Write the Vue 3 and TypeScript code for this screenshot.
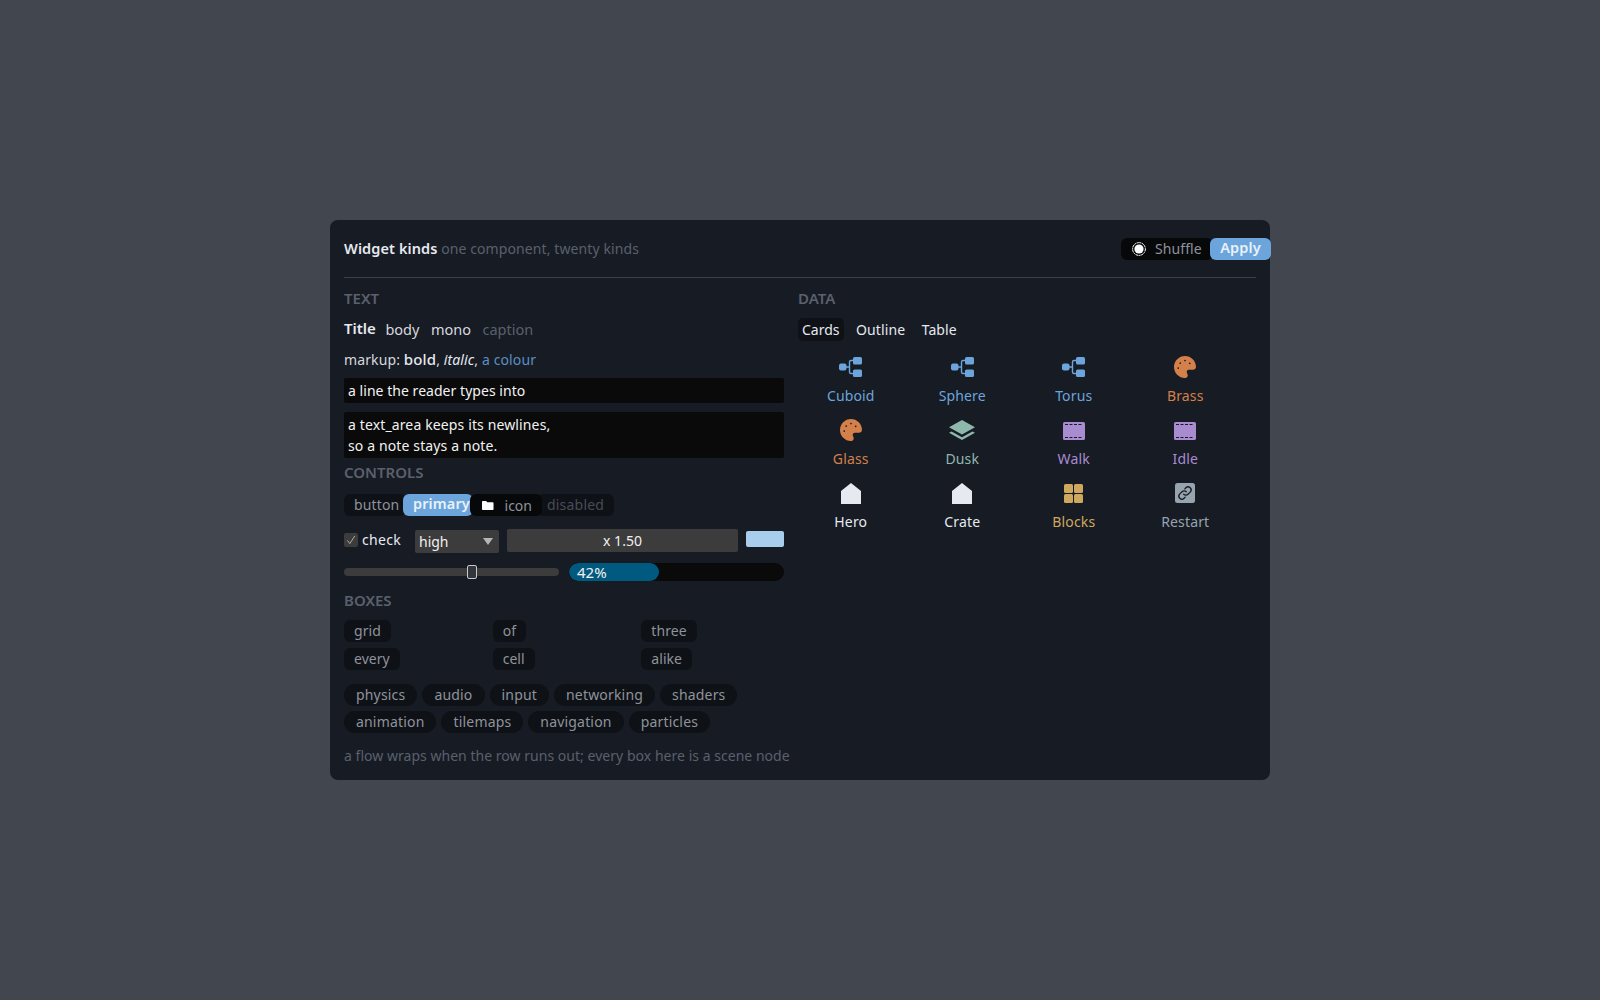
<script setup lang="ts">
interface Cell { label: string; icon: string; tone: string }
const cells: Cell[] = [
  { label: 'Cuboid', icon: 'tree', tone: 'blue' },
  { label: 'Sphere', icon: 'tree', tone: 'blue' },
  { label: 'Torus', icon: 'tree', tone: 'blue' },
  { label: 'Brass', icon: 'palette', tone: 'orange' },
  { label: 'Glass', icon: 'palette', tone: 'orange' },
  { label: 'Dusk', icon: 'layers', tone: 'teal' },
  { label: 'Walk', icon: 'film', tone: 'purple' },
  { label: 'Idle', icon: 'film', tone: 'purple' },
  { label: 'Hero', icon: 'house', tone: 'white' },
  { label: 'Crate', icon: 'house', tone: 'white' },
  { label: 'Blocks', icon: 'blocks', tone: 'gold' },
  { label: 'Restart', icon: 'link', tone: 'grey' },
]
const gridBoxes = ['grid', 'of', 'three', 'every', 'cell', 'alike']
const pills = [
  ['physics', 'audio', 'input', 'networking', 'shaders'],
  ['animation', 'tilemaps', 'navigation', 'particles'],
]
</script>

<template>
  <div class="page">
    <section class="card">
      <header class="head">
        <div class="head-title"><strong>Widget kinds</strong> <span class="muted sub">one component, twenty kinds</span></div>
        <div class="head-actions">
          <button class="btn btn-shuffle">
            <svg width="14" height="14" viewBox="0 0 14 14">
              <circle cx="7" cy="7" r="6.4" fill="none" stroke="#fff" stroke-width="1" stroke-dasharray="2.2 0.5" />
              <circle cx="7" cy="7" r="4.6" fill="#fff" />
            </svg>
            <span class="shuffle-label">Shuffle</span>
          </button>
          <button class="btn btn-primary btn-apply">Apply</button>
        </div>
      </header>

      <div class="cols">
        <div class="col">
          <h2 class="sec">TEXT</h2>
          <div class="kinds">
            <strong class="k-title">Title</strong>
            <span>body</span>
            <span>mono</span>
            <span class="muted">caption</span>
          </div>
          <p class="markup">markup: <b>bold</b>, <i>italic</i>, <span class="link">a colour</span></p>
          <div class="field">a line the reader types into</div>
          <div class="area">a text_area keeps its newlines,<br />so a note stays a note.</div>

          <h2 class="sec sec-controls">CONTROLS</h2>
          <div class="btn-row">
            <button class="btn b-plain">button</button>
            <button class="btn btn-primary b-primary">primary</button>
            <button class="btn b-icon">
              <svg width="14" height="11" viewBox="0 0 14 11">
                <path d="M1 0h4l1.4 1.6H13a1 1 0 0 1 1 1V10a1 1 0 0 1-1 1H1a1 1 0 0 1-1-1V1a1 1 0 0 1 1-1z" fill="#fff" />
              </svg>
              <span>icon</span>
            </button>
            <button class="btn b-disabled">disabled</button>
          </div>
          <div class="ctl-row">
            <label class="check">
              <span class="box">
                <svg width="14" height="14" viewBox="0 0 14 14">
                  <path d="M3.4 7.4l2.4 3.2L10.8 3" fill="none" stroke="#b4b4b4" stroke-width="0.9" />
                </svg>
              </span>
              check
            </label>
            <div class="select">
              <span>high</span>
              <span class="tri"></span>
            </div>
            <div class="spin">x 1.50</div>
            <div class="swatch"></div>
          </div>
          <div class="meter-row">
            <div class="slider"><span class="thumb"></span></div>
            <div class="progress">
              <div class="fill" :style="{ width: '42%' }">42%</div>
            </div>
          </div>

          <h2 class="sec sec-boxes">BOXES</h2>
          <div class="three">
            <div v-for="b in gridBoxes" :key="b" class="three-cell"><span class="chip">{{ b }}</span></div>
          </div>
          <div class="flow">
            <div v-for="(row, i) in pills" :key="i" class="flow-row">
              <span v-for="p in row" :key="p" class="pill">{{ p }}</span>
            </div>
          </div>
          <p class="foot">a flow wraps when the row runs out; every box here is a scene node</p>
        </div>

        <div class="col">
          <h2 class="sec">DATA</h2>
          <div class="tabs">
            <span class="tab tab-on">Cards</span>
            <span class="tab">Outline</span>
            <span class="tab">Table</span>
          </div>
          <div class="cells">
            <div v-for="c in cells" :key="c.label" class="cell" :class="c.tone">
              <div class="ico">
                <svg v-if="c.icon === 'tree'" width="23" height="20" viewBox="0 0 23 20">
                  <path d="M7 10h3.5M14 3.5h-2a1.5 1.5 0 0 0-1.5 1.5v10a1.5 1.5 0 0 0 1.5 1.5h2" fill="none" stroke="currentColor" stroke-width="1.4" />
                  <rect x="0" y="6.5" width="7.5" height="7" rx="2" fill="currentColor" />
                  <rect x="14" y="0" width="9" height="7.5" rx="1.6" fill="currentColor" />
                  <rect x="14" y="12.5" width="9" height="7.5" rx="1.6" fill="currentColor" />
                </svg>
                <svg v-else-if="c.icon === 'palette'" width="22" height="22" viewBox="0 0 512 512">
                  <path fill="currentColor" fill-rule="evenodd" d="M512 256c0 .9 0 1.8 0 2.7c-.4 36.5-33.6 61.3-70.1 61.3H344c-26.5 0-48 21.5-48 48c0 3.4 .4 6.7 1 9.9c2.1 10.2 6.5 20 10.8 29.9c6.1 13.8 12.1 27.5 12.1 42c0 31.8-21.6 60.7-53.4 62c-3.5 .1-7 .2-10.6 .2C114.6 512 0 397.4 0 256S114.6 0 256 0S512 114.6 512 256zM118 280a20 20 0 1 0 -40 0 20 20 0 1 0 40 0zM165 165a20 20 0 1 0 -40 0 20 20 0 1 0 40 0zM276 105a20 20 0 1 0 -40 0 20 20 0 1 0 40 0zM385 170a20 20 0 1 0 -40 0 20 20 0 1 0 40 0z" />
                </svg>
                <svg v-else-if="c.icon === 'layers'" width="26" height="20" viewBox="0 0 26 20">
                  <path d="M13 0l13 7.2-13 7.2L0 7.2z" fill="currentColor" />
                  <path d="M2.6 11.4L13 17.2l10.4-5.8L26 12.8 13 20 0 12.8z" fill="currentColor" />
                </svg>
                <svg v-else-if="c.icon === 'film'" class="film" width="22" height="18" viewBox="0 0 22 18">
                  <rect width="22" height="18" rx="1.6" fill="currentColor" />
                  <path d="M2 2.5H20M2 15.5H20" stroke="#171b24" stroke-width="1" stroke-dasharray="3 1.5" fill="none" />
                </svg>
                <svg v-else-if="c.icon === 'house'" width="20" height="21" viewBox="0 0 20 21">
                  <path d="M10 0l10 8v13H0V8z" fill="currentColor" />
                </svg>
                <svg v-else-if="c.icon === 'blocks'" width="19" height="19" viewBox="0 0 19 19">
                  <rect x="0" y="0" width="9" height="9" rx="1.5" fill="currentColor" />
                  <rect x="10" y="0" width="9" height="9" rx="1.5" fill="currentColor" />
                  <rect x="0" y="10" width="9" height="9" rx="1.5" fill="currentColor" />
                  <rect x="10" y="10" width="9" height="9" rx="1.5" fill="currentColor" />
                </svg>
                <svg v-else width="20" height="20" viewBox="0 0 20 20">
                  <rect width="20" height="20" rx="2.5" fill="currentColor" />
                  <path d="M8.7 11.3a3 3 0 0 0 4.3 0l2.2-2.2a3 3 0 0 0-4.3-4.3L9.8 5.9M11.3 8.7a3 3 0 0 0-4.3 0L4.8 10.9a3 3 0 0 0 4.3 4.3l1.1-1.1" fill="none" stroke="#171b24" stroke-width="1.3" stroke-linecap="round" />
                </svg>
              </div>
              <div class="cap">{{ c.label }}</div>
            </div>
          </div>
        </div>
      </div>
    </section>
  </div>
</template>

<style scoped>
.page {
  min-height: 100vh;
  display: flex;
  align-items: center;
  justify-content: center;
  background: #41464f;
  font-family: "Noto Sans", sans-serif;
  font-size: 14px;
  color: #d6d9df;
}
.card {
  box-sizing: border-box;
  width: 940px;
  height: 560px;
  padding: 14px;
  background: #171b24;
  border-radius: 8px;
}
.head {
  display: flex;
  justify-content: space-between;
  align-items: center;
  height: 28px;
  padding-bottom: 15px;
  border-bottom: 1px solid #3b3f48;
}
.head-title strong { font-weight: 600; font-size: 14.5px; letter-spacing: 0.1px; color: #e6e9ef; }
.muted { color: #5a606c; }
.sub { letter-spacing: 0.1px; }
.head-actions { display: flex; margin-right: -15px; margin-top: 2px; }
.btn {
  box-sizing: border-box;
  display: flex;
  align-items: center;
  height: 22px;
  padding: 0 10px;
  border: 0;
  border-radius: 6px;
  font: inherit;
  color: #8e939c;
  background: #0e1116;
}
.btn-primary { background: #6ca5dc; color: #e9f1f9; font-weight: 600; font-size: 14.5px; letter-spacing: 0.1px; padding-bottom: 4px; }
.btn-shuffle { width: 92px; padding: 0 0 0 11px; gap: 9px; background: #07080a; letter-spacing: 0.1px; }
.shuffle-label { margin-top: -2px; }
.btn-apply { position: relative; margin-left: -3px; width: 61px; justify-content: center; }
.cols {
  display: grid;
  grid-template-columns: 440px 440px;
  column-gap: 14px;
}
.sec {
  margin: 11px 0 0;
  height: 20px;
  line-height: 18px;
  font-size: 15px;
  font-weight: 600;
  color: #5a606c;
}
.kinds { display: flex; align-items: center; gap: 11.5px; height: 22px; margin-top: 9px; font-size: 14.5px; }
.k-title { font-weight: 600; font-size: 15px; color: #e6e9ef; margin-top: -2px; margin-right: -2px; }
.markup { margin: 9px 0 0; height: 20px; line-height: 20px; letter-spacing: 0.12px; }
.markup b { font-weight: 500; color: #e6e9ef; font-size: 15px; }
.markup i { color: #e6e9ef; }
.link { color: #5a8fc2; }
.field, .area {
  box-sizing: border-box;
  background: #0a0a0a;
  color: #f2f2f2;
  padding: 0 4px;
  border-radius: 2px;
}
.field { margin-top: 9px; height: 25px; line-height: 25px; letter-spacing: 0.04px; }
.area { margin-top: 9px; height: 46px; padding-top: 2px; line-height: 21px; letter-spacing: 0.13px; }
.sec-controls { margin-top: 5px; }
.btn-row { display: flex; margin-top: 11px; }
.b-plain { width: 62px; letter-spacing: 0.15px; padding-bottom: 1px; }
.b-primary { position: relative; margin-left: -3px; width: 70px; }
.b-icon { position: relative; margin-left: -3px; width: 72px; gap: 11px; background: #07080a; padding-left: 12px; }
.b-disabled { margin-left: -5px; width: 77px; padding-left: 10px; padding-bottom: 1px; color: #474c56; letter-spacing: 0.2px; }
.ctl-row { display: flex; align-items: center; margin-top: 13px; height: 24px; }
.check { display: flex; align-items: center; gap: 4px; width: 71px; color: #e6e9ef; margin-top: -4px; letter-spacing: 0.3px; }
.box { width: 14px; height: 14px; background: #3c3c3c; border-radius: 2px; display: block; line-height: 0; margin-top: 2px; }
.select {
  box-sizing: border-box;
  display: flex;
  align-items: center;
  justify-content: space-between;
  width: 84px;
  height: 23px;
  padding: 0 5px 0 4px;
  background: #3c3c3c;
  border-radius: 2px;
  color: #f0f0f0;
}
.tri { width: 0; height: 0; border-left: 5.5px solid transparent; border-right: 5.5px solid transparent; border-top: 7px solid #b5b5b5; margin-right: 1px; }
.spin {
  margin-left: 8px;
  width: 231px;
  height: 23px;
  line-height: 23px;
  margin-top: -1px;
  text-align: center;
  background: #3c3c3c;
  border-radius: 2px;
  color: #f0f0f0;
}
.swatch { margin-left: 8px; width: 38px; height: 16px; margin-top: -4px; background: #a9cdec; border-radius: 2px; }
.meter-row { display: flex; align-items: center; margin-top: 10px; height: 18px; gap: 10px; }
.slider { position: relative; width: 215px; height: 8px; background: #3c3c3c; border-radius: 4px; }
.thumb {
  position: absolute;
  left: 123px;
  top: -3px;
  box-sizing: border-box;
  width: 10px;
  height: 14px;
  background: #33363c;
  border: 1px solid #c8c8c8;
  border-radius: 2px;
}
.progress { flex: 1; height: 18px; background: #0a0a0a; border-radius: 9px; overflow: hidden; }
.fill { height: 18px; line-height: 18px; background: #005a7f; color: #f0f0f0; padding-left: 8px; box-sizing: border-box; border-radius: 9px; font-size: 15px; }
.sec-boxes { margin-top: 10px; }
.three { display: grid; grid-template-columns: repeat(3, 1fr); gap: 6px; margin-top: 9px; }
.three-cell { display: flex; }
.chip { height: 22px; line-height: 22px; padding: 0 10px; background: #0e1116; border-radius: 6px; color: #8e939c; letter-spacing: 0.05px; }
.flow { margin-top: 14px; display: flex; flex-direction: column; gap: 5px; }
.flow-row { display: flex; gap: 5px; }
.pill { height: 22px; line-height: 22px; padding: 0 12px; background: #0e1116; border-radius: 11px; color: #8e939c; letter-spacing: 0.18px; }
.foot { margin: 13px 0 0; height: 20px; line-height: 20px; white-space: nowrap; color: #5a606c; letter-spacing: 0.03px; }
.tabs { display: flex; gap: 8.5px; margin-top: 9px; height: 23px; }
.tab { padding: 0 4px; line-height: 23px; color: #e6e9ef; border-radius: 5px; letter-spacing: 0.1px; }
.tab-on { background: #0e1116; letter-spacing: 0; }
.cells { display: grid; grid-template-columns: repeat(4, 1fr); column-gap: 6px; row-gap: 6px; margin-top: 14px; }
.cell { height: 57px; display: flex; flex-direction: column; align-items: center; letter-spacing: 0.15px; }
.ico { height: 24px; display: flex; align-items: center; justify-content: center; }
.film { margin-top: 2px; }
.cap { margin-top: 7px; height: 20px; line-height: 20px; }
.blue { color: #6ca5dc; }
.orange { color: #d4804a; }
.teal { color: #8fb8ad; }
.purple { color: #a98bd0; }
.white { color: #e6e9ef; }
.gold { color: #cfa860; }
.grey { color: #97a3ae; }
</style>

<style>
html, body { margin: 0; background: #41464f; }
</style>
